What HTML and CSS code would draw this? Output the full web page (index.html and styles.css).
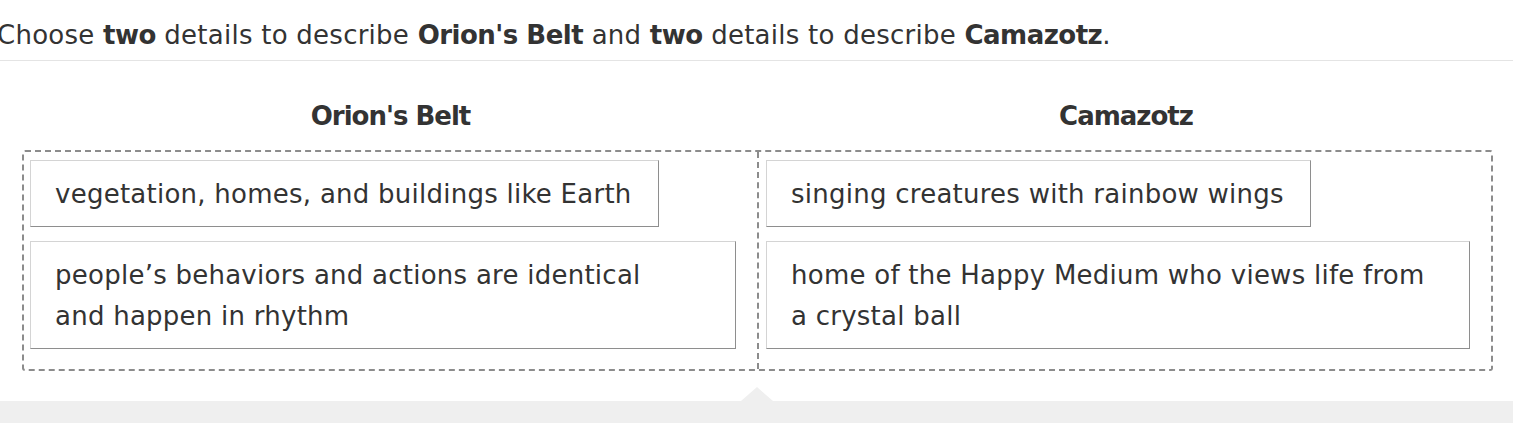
FILE: index.html
```html
<!DOCTYPE html>
<html>
<head>
<meta charset="utf-8">
<link rel="stylesheet" href="styles.css">
</head>
<body>
<div class="page">
  <p class="prompt">Choose <b>two</b> details to describe <b>Orion's Belt</b> and <b>two</b> details to describe <b>Camazotz</b>.</p>
  <div class="rule"></div>
  <div class="heads">
    <div class="head">Orion's Belt</div>
    <div class="head">Camazotz</div>
  </div>
  <div class="board">
    <div class="col col-left">
      <div class="card">vegetation, homes, and buildings like Earth</div>
      <div class="card wide">people’s behaviors and actions are identical<br>and happen in rhythm</div>
    </div>
    <div class="col col-right">
      <div class="card">singing creatures with rainbow wings</div>
      <div class="card wide">home of the Happy Medium who views life from<br>a crystal ball</div>
    </div>
  </div>
  <div class="tray"><span class="notch"></span></div>
</div>
</body>
</html>
```

FILE: styles.css
```css
html, body {
  margin: 0;
  padding: 0;
  background: #ffffff;
}
body {
  font-family: "DejaVu Sans", "Open Sans", sans-serif;
  color: #333333;
  width: 1513px;
  height: 424px;
  overflow: hidden;
}
.page {
  display: flex;
  flex-direction: column;
}
.prompt {
  margin: 0;
  padding-top: 17px;
  height: 44px;
  box-sizing: border-box;
  font-size: 26px;
  line-height: 36px;
  letter-spacing: 0.25px;
  text-indent: -3px;
  white-space: nowrap;
}
.prompt b {
  font-weight: 700;
  letter-spacing: -0.5px;
}
.rule {
  height: 1px;
  background: #e4e4e4;
  margin-top: 16px;
}
.heads {
  display: grid;
  grid-template-columns: 737px 734px;
  margin-left: 22px;
  padding-top: 37px;
  height: 89px;
  box-sizing: border-box;
}
.head {
  text-align: center;
  font-weight: 700;
  font-size: 26px;
  line-height: 36px;
  letter-spacing: -1px;
}
.board {
  margin-left: 22px;
  width: 1471px;
  height: 221px;
  box-sizing: border-box;
  border: 2px dashed #8c8c8c;
  border-radius: 3px;
  display: grid;
  grid-template-columns: 735px 1fr;
}
.col {
  display: flex;
  flex-direction: column;
  align-items: flex-start;
  gap: 14px;
  padding-top: 8px;
}
.col-left {
  border-right: 2px dashed #8c8c8c;
  padding-left: 6px;
  padding-right: 21px;
}
.col-right {
  padding-left: 7px;
  padding-right: 21px;
}
.card {
  box-sizing: border-box;
  background: #ffffff;
  border: 1px solid #d4d4d4;
  border-right-color: #8e8e8e;
  border-bottom-color: #8e8e8e;
  padding: 13px 26px 11px 24px;
  font-size: 26px;
  line-height: 41px;
  letter-spacing: 0.25px;
}
.card.wide {
  align-self: stretch;
}
.tray {
  margin-top: 30px;
  height: 22px;
  background: #efefef;
  position: relative;
}
.notch {
  position: absolute;
  left: 741px;
  top: -14px;
  width: 0;
  height: 0;
  border-left: 16px solid transparent;
  border-right: 16px solid transparent;
  border-bottom: 14px solid #efefef;
}
```
